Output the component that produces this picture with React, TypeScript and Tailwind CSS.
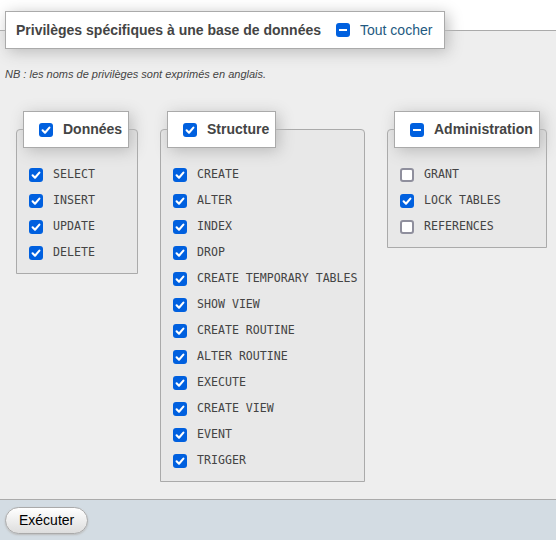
import React, { useState } from 'react';

type Priv = { name: string; checked: boolean };

const groups: { title: string; width: string; state: 'all' | 'some'; items: Priv[] }[] = [
  {
    title: 'Données',
    width: 'w-[122px]',
    state: 'all',
    items: ['SELECT', 'INSERT', 'UPDATE', 'DELETE'].map((n) => ({ name: n, checked: true })),
  },
  {
    title: 'Structure',
    width: 'w-[205px]',
    state: 'all',
    items: [
      'CREATE',
      'ALTER',
      'INDEX',
      'DROP',
      'CREATE TEMPORARY TABLES',
      'SHOW VIEW',
      'CREATE ROUTINE',
      'ALTER ROUTINE',
      'EXECUTE',
      'CREATE VIEW',
      'EVENT',
      'TRIGGER',
    ].map((n) => ({ name: n, checked: true })),
  },
  {
    title: 'Administration',
    width: 'w-[158px]',
    state: 'some',
    items: [
      { name: 'GRANT', checked: false },
      { name: 'LOCK TABLES', checked: true },
      { name: 'REFERENCES', checked: false },
    ],
  },
];

function Box({ state }: { state: 'on' | 'off' | 'mixed' }) {
  if (state === 'off') {
    return <span className="block w-[14px] h-[14px] shrink-0 rounded-[3px] border-2 border-[#8f8f9d] bg-white" />;
  }
  return (
    <span className="flex items-center justify-center w-[14px] h-[14px] shrink-0 rounded-[3px] bg-[#0060df]">
      {state === 'on' ? (
        <svg width="14" height="14" viewBox="0 0 14 14">
          <path d="M3.6 7.3 L6 9.7 L10.4 4.6" fill="none" stroke="white" strokeWidth="2.1" strokeLinecap="round" strokeLinejoin="round" />
        </svg>
      ) : (
        <span className="block w-[8px] h-[2px] bg-white" />
      )}
    </span>
  );
}

export default function App() {
  const [data] = useState(groups);

  return (
    <div className="w-[556px] h-[540px] bg-white pt-[11px] flex flex-col font-['Liberation_Sans',Arial,sans-serif] text-[#444] overflow-hidden">
      <fieldset className="h-[488px] border-t border-[#aaa] bg-[#eee] px-[5px]">
        <legend className="border border-[#aaa] bg-white shadow-[3px_3px_15px_#bbb]">
          <div className="flex items-center h-[36px] pl-[10px] pr-[12px]">
            <span className="w-[320px] text-[14px] font-bold">Privilèges spécifiques à une base de données</span>
            <Box state="mixed" />
            <span className="ml-[10px] text-[14px] text-[#235a81]">Tout cocher</span>
          </div>
        </legend>

        <p className="mt-[19px] h-[13px] leading-[13px] text-[11px] italic">
          NB : les noms de privilèges sont exprimés en anglais.
        </p>

        <div className="flex items-start gap-[22px] ml-[11px] mt-[30px]">
          {data.map((g) => (
            <fieldset
              key={g.title}
              className={`${g.width} border border-[#aaa] rounded-t-[4px] bg-[#e8e8e8] px-[6px] pb-[7px]`}
            >
              <legend className="border border-[#aaa] bg-white shadow-[3px_3px_15px_#bbb]">
                <div className="flex items-center h-[35px] pl-[15px] pr-[6px]">
                  <Box state={g.state === 'all' ? 'on' : 'mixed'} />
                  <span className="ml-[10px] text-[14px] font-bold">{g.title}</span>
                </div>
              </legend>
              <ul className="mt-[14px] pl-[6px]">
                {g.items.map((it) => (
                  <li key={it.name} className="flex items-center h-[26px]">
                    <Box state={it.checked ? 'on' : 'off'} />
                    <span className="ml-[10px] whitespace-pre font-['DejaVu_Sans_Mono',monospace] text-[11.6px] text-[#444]">
                      {it.name}
                    </span>
                  </li>
                ))}
              </ul>
            </fieldset>
          ))}
        </div>
      </fieldset>

      <div className="flex-1 border-t border-[#aaa] bg-[#d3dce3] px-[5px] pt-[7px]">
        <button className="h-[27px] px-[13px] rounded-full border border-[#aaa] bg-gradient-to-b from-white to-[#ddd] text-[14px] text-black shadow-[0_1px_2px_#bbb]">
          Exécuter
        </button>
      </div>
    </div>
  );
}
